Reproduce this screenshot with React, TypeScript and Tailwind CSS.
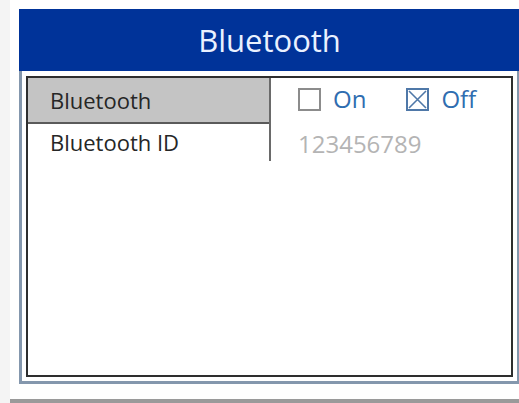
import React from "react";

const font = { fontFamily: '"Open Sans", "Liberation Sans", sans-serif' };

const CheckBox = ({ checked }: { checked: boolean }) => (
  <span
    className={
      checked
        ? "w-[23px] h-[23px] border-2 border-[#4f78a8] flex items-center justify-center"
        : "w-[23px] h-[23px] border-2 border-[#8c8c8c] flex items-center justify-center"
    }
  >
    {checked && (
      <svg width="19" height="19" viewBox="0 0 19 19">
        <path d="M1 1 L18 18 M18 1 L1 18" stroke="#4f78a8" strokeWidth="1.6" />
      </svg>
    )}
  </span>
);

const SettingsRow = ({ label, selected }: { label: string; selected?: boolean }) => (
  <div
    className={
      selected
        ? "h-[46px] bg-[#c4c4c4] border-b-2 border-[#5a5a5a] flex items-center pl-[22px] text-[#262626]"
        : "h-[37px] bg-white flex items-center pl-[22px] text-[#262626]"
    }
  >
    {label}
  </div>
);

export default function App() {
  return (
    <div className="w-[519px] h-[403px] bg-[#f4f4f4] overflow-hidden" style={font}>
      <div className="ml-[10px] h-[399px] bg-white pl-[9px] pt-[9px]">
        <div className="w-[501px]">
          {/* title bar */}
          <div className="h-[62px] bg-[#003399] flex items-center justify-center text-[31px] text-[#eaf1ff]">
            Bluetooth
          </div>

          {/* body frame */}
          <div className="border-x-[3px] border-b-[3px] border-[#8497ad] px-[4px] pt-[5px] pb-[4px]">
            <div className="h-[301px] border-2 border-[#2e2e2e] bg-white flex text-[22px]">
              <div className="w-[243px] self-start border-r-2 border-[#6a6a6a]">
                <SettingsRow label="Bluetooth" selected />
                <SettingsRow label="Bluetooth ID" />
              </div>

              <div className="flex-1 pl-[27px] pt-[9px] text-[24px]">
                <div className="h-[24px] flex items-center">
                  <CheckBox checked={false} />
                  <span className="ml-[12px] text-[#2f6db0]">On</span>
                  <span className="ml-[40px]">
                    <CheckBox checked />
                  </span>
                  <span className="ml-[12px] text-[#2f6db0]">Off</span>
                </div>
                <div className="mt-[20px] h-[26px] flex items-center text-[#b4b4b4]">123456789</div>
              </div>
            </div>
          </div>
        </div>
      </div>
      <div className="ml-[10px] h-[4px] bg-[#9a9a9a]" />
    </div>
  );
}
